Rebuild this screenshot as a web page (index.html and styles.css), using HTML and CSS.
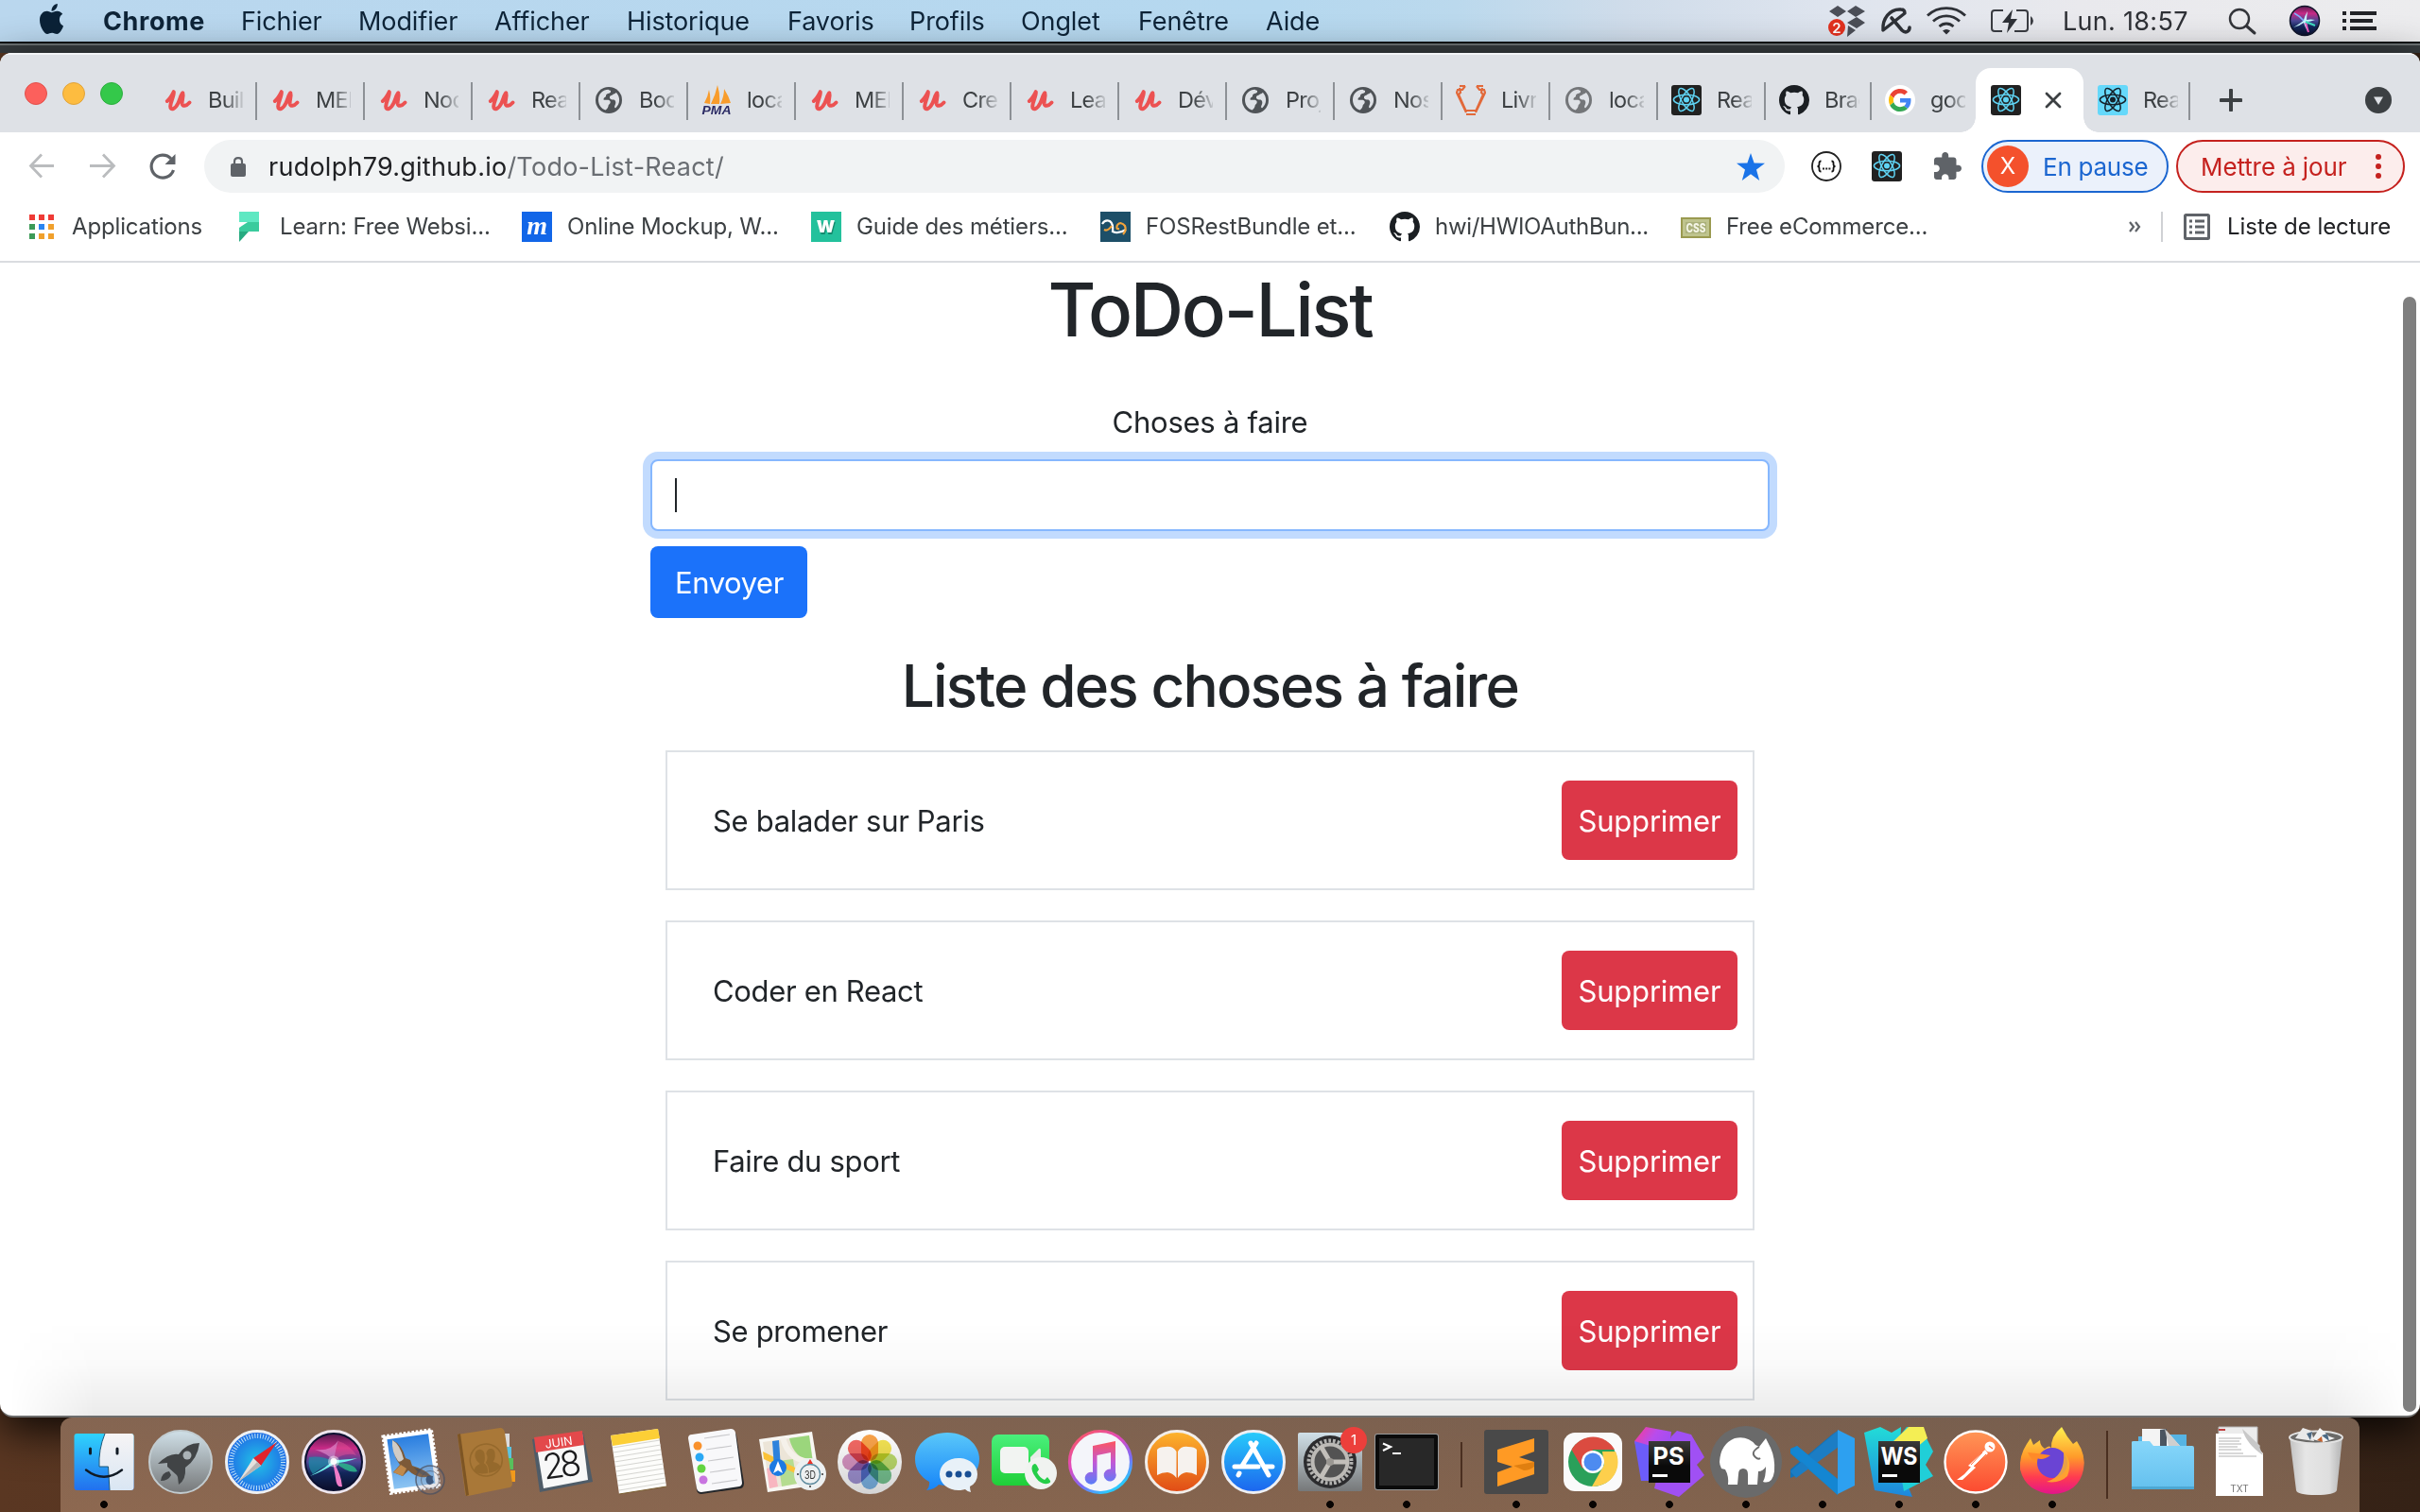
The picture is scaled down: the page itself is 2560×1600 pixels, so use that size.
FILE: index.html
```html
<!DOCTYPE html>
<html lang="fr">
<head>
<meta charset="utf-8">
<title>ToDo-List</title>
<link rel="stylesheet" href="styles.css">
</head>
<body>
<svg class="defs" width="0" height="0">
  <defs>
    <linearGradient id="gFinder" x2="0" y2="1"><stop offset="0" stop-color="#2fd3fd"/><stop offset="1" stop-color="#2270ee"/></linearGradient>
    <linearGradient id="gPale" x2="0" y2="1"><stop offset="0" stop-color="#f6f4f5"/><stop offset="1" stop-color="#d9e6f3"/></linearGradient>
    <linearGradient id="gSteel" x2="0" y2="1"><stop offset="0" stop-color="#d0e0e8"/><stop offset="1" stop-color="#767879"/></linearGradient>
    <radialGradient id="gSafari"><stop offset="0" stop-color="#22c4e6"/><stop offset="1" stop-color="#1f6be6"/></radialGradient>
    <linearGradient id="gSiri" x2="0" y2="1"><stop offset="0" stop-color="#5a1c50"/><stop offset=".25" stop-color="#c82a86"/><stop offset=".5" stop-color="#4b4896"/><stop offset=".7" stop-color="#12265a"/><stop offset="1" stop-color="#0b0f2c"/></linearGradient>
    <linearGradient id="gSky" x2="0" y2="1"><stop offset="0" stop-color="#2a7ee0"/><stop offset="1" stop-color="#8cc4f2"/></linearGradient>
    <linearGradient id="gMsg" x2="0" y2="1"><stop offset="0" stop-color="#5ac8fa"/><stop offset="1" stop-color="#1684f8"/></linearGradient>
    <linearGradient id="gGreen" x2="0" y2="1"><stop offset="0" stop-color="#4af07c"/><stop offset="1" stop-color="#1fcf38"/></linearGradient>
    <linearGradient id="gRing" x2=".6" y2="1"><stop offset="0" stop-color="#ff5a50"/><stop offset=".45" stop-color="#e04ac0"/><stop offset=".75" stop-color="#7a6cf8"/><stop offset="1" stop-color="#2ac8ff"/></linearGradient>
    <linearGradient id="gNote" x2="0" y2="1"><stop offset="0" stop-color="#fc5560"/><stop offset=".5" stop-color="#c058d8"/><stop offset="1" stop-color="#5a7cf8"/></linearGradient>
    <linearGradient id="gBooks" x2="0" y2="1"><stop offset="0" stop-color="#fdb52c"/><stop offset="1" stop-color="#e04a16"/></linearGradient>
    <linearGradient id="gStore" x2="0" y2="1"><stop offset="0" stop-color="#27cdfb"/><stop offset="1" stop-color="#1c64ee"/></linearGradient>
    <linearGradient id="gPS" x2="1" y2="1"><stop offset="0" stop-color="#fb3a90"/><stop offset=".35" stop-color="#b84cec"/><stop offset="1" stop-color="#8050fa"/></linearGradient>
    <linearGradient id="gInk" x2="0" y2="1"><stop offset="0" stop-color="#3a3a3a"/><stop offset=".6" stop-color="#0a0a0a"/></linearGradient>
    <linearGradient id="gWS" x2="0" y2="1"><stop offset="0" stop-color="#22dcd8"/><stop offset="1" stop-color="#1e86dc"/></linearGradient>
    <linearGradient id="gPost" x2="0" y2="1"><stop offset="0" stop-color="#ff9656"/><stop offset="1" stop-color="#fc4a30"/></linearGradient>
    <linearGradient id="gFox" x2="0" y2="1"><stop offset="0" stop-color="#fff14f"/><stop offset=".45" stop-color="#ff9a2a"/><stop offset=".75" stop-color="#ff3b50"/><stop offset="1" stop-color="#e3148c"/></linearGradient>
    <linearGradient id="gFolder" x2="0" y2="1"><stop offset="0" stop-color="#86d6fa"/><stop offset="1" stop-color="#64c0ee"/></linearGradient>
    <linearGradient id="gTrash" x2="1" y2="0"><stop offset="0" stop-color="#c2c2c2"/><stop offset=".3" stop-color="#e6e6e6"/><stop offset=".75" stop-color="#dedede"/><stop offset="1" stop-color="#b2b2b2"/></linearGradient>
    <linearGradient id="gWhite" x2="0" y2="1"><stop offset="0" stop-color="#fff"/><stop offset="1" stop-color="#d4d4d4"/></linearGradient>
  </defs>
  <symbol id="atom" viewBox="0 0 32 32"><circle cx="16" cy="15.5" r="3"  fill="currentColor"/><g fill="none" stroke="currentColor" stroke-width="1.5"><ellipse cx="16" cy="15.5" rx="13.6" ry="5.2"/><ellipse cx="16" cy="15.5" rx="13.6" ry="5.2" transform="rotate(60 16 15.5)"/><ellipse cx="16" cy="15.5" rx="13.6" ry="5.2" transform="rotate(120 16 15.5)"/></g></symbol>
  <symbol id="udemy" viewBox="0 0 32 32"><path d="M4.800 17C8 14.500 10 11 11.800 7.200C12.200 12 8.200 18 8.200 22.500C8.200 27.500 13.500 25.500 16.500 19C18.500 14.500 19.500 10 21.300 8.300C22.500 12 20.300 15.500 20.600 19.500C21 23 25 22.500 28.500 18.500" fill="none" stroke="#ec5252" stroke-width="4" stroke-linejoin="round" stroke-linecap="round"/></symbol>
  <symbol id="globe" viewBox="0 0 32 32"><circle cx="16" cy="16" r="14" fill="currentColor"/><path d="M5 15.500C5 9 10 4.800 15.500 4.800C17 6 18.500 5.500 18 7.500C17 9.500 13.500 8.500 13 11C13.500 13 10.500 12.500 10.500 15.500C12.500 16.500 16 14.500 17.500 17C18.500 20 15.500 20 15.500 22.500C15 25 13 26 12.500 26.500C8 25 5 21 5 15.500Z" fill="#dee1e6"/><path d="M21 9.500C23 9.500 23.500 7.500 24 8C28.500 13 28 20 23.500 24C22.500 25 21.500 23.500 22.500 21.500C23.500 19.500 24 17 21.500 15.500C19 15.500 16.500 15 17 12.500C17.500 10.500 19.500 11.500 21 9.500Z" fill="#dee1e6"/></symbol>
  <symbol id="github" viewBox="0 0 16 16"><path fill="currentColor" d="M8 0C3.58 0 0 3.58 0 8c0 3.540 2.290 6.530 5.470 7.590.4.070.55-.17.55-.38 0-.19-.01-.82-.01-1.490-2.010.37-2.530-.49-2.690-.94-.09-.23-.48-.94-.82-1.130-.28-.15-.68-.52-.01-.53.63-.01 1.080.58 1.230.82.72 1.210 1.870.87 2.330.66.07-.52.28-.87.51-1.070-1.780-.2-3.640-.89-3.640-3.950 0-.87.31-1.590.82-2.150-.08-.2-.36-1.020.08-2.120 0 0 .67-.21 2.200.82.64-.18 1.320-.27 2-.27s1.360.09 2 .27c1.530-1.040 2.200-.82 2.200-.82.44 1.100.16 1.920.08 2.120.51.56.82 1.270.82 2.150 0 3.070-1.870 3.750-3.650 3.950.29.25.54.73.54 1.480 0 1.070-.01 1.930-.01 2.200 0 .21.15.46.55.38A8.010 8.010 0 0 0 16 8c0-4.420-3.580-8-8-8z"/></symbol>
</svg>

<header class="menubar">
  <svg class="apple" viewBox="4 32 376 448" preserveAspectRatio="none"><path fill="currentColor" d="M318.7 268.700c-.2-36.700 16.400-64.400 50-84.800-18.800-26.900-47.200-41.700-84.700-44.600-35.500-2.800-74.300 20.700-88.500 20.700-15 0-49.400-19.700-76.400-19.700C63.300 141.200 4 184.800 4 273.500q0 39.300 14.400 81.200c12.800 36.700 59 126.700 107.200 125.200 25.200-.6 43-17.900 75.800-17.900 31.800 0 48.300 17.900 76.400 17.900 48.600-.7 90.400-82.500 102.600-119.300-65.200-30.700-61.700-90-61.700-91.900zm-56.600-164.200c27.300-32.400 24.800-61.900 24-72.500-24.100 1.400-52 16.400-67.900 34.900-17.500 19.800-27.800 44.300-25.600 71.900 26.100 2 49.900-11.400 69.500-34.300z"/></svg>
  <nav class="menus">
    <span class="app-name">Chrome</span><span>Fichier</span><span>Modifier</span><span>Afficher</span><span>Historique</span><span>Favoris</span><span>Profils</span><span>Onglet</span><span>Fenêtre</span><span>Aide</span>
  </nav>
  <svg class="status" viewBox="1920 0 260 44">
    <g fill="#4b4e57"><path d="M1935 12l9-6 9 6-9 6zM1954 12l9-6 10 6-10 6zM1954 24l10-6 9 6-9 6zM1955 27l8 5-9 7z"/></g>
    <circle cx="1943" cy="29" r="9" fill="#e2311f"/><text x="1943" y="34.500" class="status-count">2</text>
    <g fill="none" stroke="#2e3137" stroke-linecap="round"><path d="M1992 32C1991 20 1999 9 2011 10C2014 10 2015 12 2015 14Z" stroke-width="3.400" stroke-linejoin="round"/><path d="M2001 19L2012 32C2016 36 2020 33 2020 29" stroke-width="3.600"/></g>
    <g fill="none" stroke="#2e3137" stroke-width="2.800"><path d="M2039 16.500C2050 6 2068 6 2079 16.500"/><path d="M2045 22.500C2053 15 2065 15 2073 22.500"/><path d="M2051.500 28C2056 24 2062 24 2066.500 28"/></g><path d="M2055 32.500Q2059 29.500 2063 32.500L2059 36.500Z" fill="#2e3137"/>
    <g fill="none" stroke="#3a3c42" stroke-width="2"><path d="M2119 11H2110Q2107 11 2107 14V30Q2107 33 2110 33H2118M2133 11H2142Q2145 11 2145 14V30Q2145 33 2142 33H2131"/></g><path d="M2148 17Q2151 19 2151 22T2148 27Z" fill="#3a3c42"/><path d="M2129 10L2118 24H2125L2123 35L2134 20H2127Z" fill="#2e3137"/>
  </svg>
  <span class="clock">Lun. 18:57</span>
  <svg class="tray" viewBox="2350 0 170 44">
    <g fill="none" stroke="#33353a" stroke-linecap="round"><circle cx="2369" cy="20" r="10" stroke-width="2.400"/><path d="M2377 28L2385 35" stroke-width="3"/></g>
    <circle cx="2438" cy="22" r="15.500" fill="url(#gSiri)" stroke="#10152a" stroke-width="1.500"/><path d="M2426 29Q2435 24 2437 21Q2438 17 2441 12Q2440 18 2440 21Q2444 20 2449 21Q2444 23 2440 23Q2441 27 2441 33Q2438 28 2437 24Q2432 28 2426 29Z" fill="#c8f8ff"/><path d="M2427 14Q2433 17 2437 22" stroke="#7fb4ff" stroke-width="1.500" fill="none"/><path d="M2439 24L2442 34" stroke="#f05ac0" stroke-width="2"/><path d="M2439 23L2449 27" stroke="#3edcc0" stroke-width="2"/>
    <g fill="#222327"><path d="M2478 12h4v4h-4zM2478 20h4v4h-4zM2478 28h4v4h-4zM2486 12h28v4h-28zM2486 20h24v4h-24zM2486 28h28v4h-28z"/></g>
  </svg>
</header>

<div class="desktop">
<div class="window">
  <div class="tabstrip">
    <div class="lights"><i class="red"></i><i class="amber"></i><i class="green"></i></div>
    <div class="tab"><svg><use href="#udemy"/></svg><b>Buil</b></div>
    <div class="tab"><svg><use href="#udemy"/></svg><b>MER</b></div>
    <div class="tab"><svg><use href="#udemy"/></svg><b>Nod</b></div>
    <div class="tab"><svg><use href="#udemy"/></svg><b>Rea</b></div>
    <div class="tab"><svg class="globe"><use href="#globe"/></svg><b>Boo</b></div>
    <div class="tab"><svg viewBox="0 0 32 32"><path d="M3 19Q7 12 8 5Q10 12 9 20ZM10 20Q15 10 17 0Q20 10 19 20ZM20 20Q24 12 24 4Q29 12 31 19Z" fill="#f89c2c"/><text x="16" y="30.500" class="pma" textLength="31" lengthAdjust="spacingAndGlyphs">PMA</text></svg><b>loca</b></div>
    <div class="tab"><svg><use href="#udemy"/></svg><b>MER</b></div>
    <div class="tab"><svg><use href="#udemy"/></svg><b>Crea</b></div>
    <div class="tab"><svg><use href="#udemy"/></svg><b>Lear</b></div>
    <div class="tab"><svg><use href="#udemy"/></svg><b>Dév</b></div>
    <div class="tab"><svg class="globe"><use href="#globe"/></svg><b>Proj</b></div>
    <div class="tab"><svg class="globe"><use href="#globe"/></svg><b>Nos</b></div>
    <div class="tab"><svg viewBox="0 0 32 32"><path d="M4 1L10 1M22 1H29M10 1L7 5H2L1 8L11 29M22 1L25 5H30L31 8L21 29M4 3L5 8L3 10L11 28M28 3L27 8L29 10L21 28M11 27H21M11 31H21" fill="none" stroke="#e2693a" stroke-width="2.200"/></svg><b>Livr</b></div>
    <div class="tab"><svg class="globe pale"><use href="#globe"/></svg><b>loca</b></div>
    <div class="tab"><svg class="react"><use href="#atom"/></svg><b>Rea</b></div>
    <div class="tab narrow"><svg class="octo"><use href="#github"/></svg><b>Brad</b></div>
    <div class="tab google last-sep"><svg viewBox="0 0 32 32"><circle cx="16" cy="16" r="16" fill="#fff"/><g transform="translate(4 4) scale(.5)"><path fill="#EA4335" d="M24 9.500c3.540 0 6.710 1.220 9.210 3.600l6.850-6.850C35.900 2.380 30.470 0 24 0 14.620 0 6.510 5.380 2.560 13.220l7.980 6.190C12.430 13.720 17.740 9.500 24 9.500z"/><path fill="#4285F4" d="M46.980 24.550c0-1.570-.15-3.090-.38-4.550H24v9.020h12.940c-.58 2.960-2.260 5.480-4.780 7.180l7.730 6c4.510-4.180 7.090-10.360 7.090-17.650z"/><path fill="#FBBC05" d="M10.530 28.590c-.48-1.450-.76-2.990-.76-4.590s.27-3.140.76-4.590l-7.980-6.190C.92 16.460 0 20.120 0 24c0 3.880.92 7.540 2.560 10.780l7.970-6.190z"/><path fill="#34A853" d="M24 48c6.480 0 11.930-2.130 15.890-5.810l-7.730-6c-2.150 1.450-4.920 2.300-8.160 2.300-6.260 0-11.570-4.220-13.470-9.910l-7.980 6.190C6.510 42.620 14.620 48 24 48z"/></g></svg><b>goo</b></div>
    <div class="tab active"><svg class="react"><use href="#atom"/></svg><svg class="close" viewBox="0 0 18 18"><path d="M2 2L16 16M16 2L2 16" stroke="#3c4043" stroke-width="2.800" stroke-linecap="round"/></svg></div>
    <div class="tab narrow"><svg class="react sky"><use href="#atom"/></svg><b>Rea</b></div>
    <svg class="plus" viewBox="0 0 24 24"><path d="M12 1.500V22.500M1.500 12H22.500" stroke="#3c4043" stroke-width="4" stroke-linecap="round"/></svg>
    <svg class="chevron" viewBox="0 0 28 28"><circle cx="14" cy="14" r="14" fill="#3c4043"/><path d="M9 10.500H19L14 19Z" fill="#dee1e6"/></svg>
  </div>

  <div class="toolbar">
    <svg class="nav" viewBox="0 0 170 40">
      <g fill="none" stroke="#babcbe" stroke-width="2.800"><path d="M27 19.500H3M14 7.500L2.500 19.500L14 31.500M65 19.500H90M79 7.500L90.500 19.500L79 31.500"/></g>
      <path d="M151 12A12 12 0 1 0 153.500 24" fill="none" stroke="#5f6368" stroke-width="3.200"/><path d="M155.500 7V18H144.500Z" fill="#5f6368"/>
    </svg>
    <div class="omnibox">
      <svg class="lock" viewBox="0 0 16 21"><rect y="7" width="16" height="14" rx="2" fill="#5f6368"/><path d="M4 8V5Q4 1.200 8 1.200T12 5V8" fill="none" stroke="#5f6368" stroke-width="2.200"/></svg>
      <span class="url">rudolph79.github.io<em>/Todo-List-React/</em></span>
      <svg class="star" viewBox="0 0 30 29"><path d="M15 0L18.600 10.400L30 10.800L21 17.600L24.200 29L15 22.300L5.800 29L9 17.600L0 10.800L11.400 10.400Z" fill="#1a73e8"/></svg>
    </div>
    <svg class="json" viewBox="0 0 32 32"><circle cx="16" cy="16" r="15" fill="#fff" stroke="#222" stroke-width="1.800"/><path d="M10.500 10.500Q8.300 10.500 8.500 13Q8.700 16 6.500 16Q8.700 16 8.500 19Q8.300 21.500 10.500 21.500M21.500 10.500Q23.700 10.500 23.500 13Q23.300 16 25.500 16Q23.300 16 23.500 19Q23.700 21.500 21.500 21.500" fill="none" stroke="#111" stroke-width="1.800"/><path d="M12 17.500h2v2h-2zM15.200 17.500h2v2h-2zM18.400 17.500h2v2h-2z" fill="#222"/></svg>
    <svg class="react ext"><use href="#atom"/></svg>
    <svg class="puzzle" viewBox="2 1 21 21"><path fill="#5f6368" d="M20.500 11H19V7c0-1.100-.9-2-2-2h-4V3.500C13 2.120 11.880 1 10.500 1S8 2.120 8 3.500V5H4c-1.100 0-1.990.9-1.990 2v3.800H3.500c1.490 0 2.700 1.210 2.700 2.700s-1.210 2.700-2.700 2.700H2V20c0 1.100.9 2 2 2h3.800v-1.500c0-1.490 1.210-2.700 2.700-2.700 1.490 0 2.700 1.210 2.700 2.700V22H17c1.100 0 2-.9 2-2v-4h1.500c1.380 0 2.500-1.120 2.500-2.500S21.880 11 20.500 11z"/></svg>
    <div class="pill profile"><span class="avatar">X</span><span class="pill-text">En pause</span></div>
    <div class="pill update"><span class="pill-text">Mettre à jour</span><span class="dots"><i></i><i></i><i></i></span></div>
  </div>

  <div class="bookmarks">
    <div class="bm b1"><svg viewBox="0 0 32 32"><g><path fill="#ef3b36" d="M3 3h6v6H3zM13 3h6v6h-6zM23 3h6v6h-6z"/><path fill="#3c9a57" d="M3 13h6v6H3zM3 23h6v6H3z"/><path fill="#2a85f0" d="M13 13h6v6h-6z"/><path fill="#f0a02c" d="M23 13h6v6h-6zM23 23h6v6h-6zM13 23h6v6h-6z"/></g></svg><span>Applications</span></div>
    <div class="bm b2"><svg viewBox="0 0 32 32"><path d="M5 0H26V11H5Z" fill="#5fe8c2"/><path d="M26 11V21H5V17L14 11Z" fill="#3acb9d"/><path d="M5 21H15L5 32Z" fill="#26aa80"/></svg><span>Learn: Free Websi...</span></div>
    <div class="bm b3"><svg viewBox="0 0 32 32"><rect width="32" height="32" fill="#1266e8"/><text x="16" y="24" class="bm-m">m</text></svg><span>Online Mockup, W...</span></div>
    <div class="bm b4"><svg viewBox="0 0 32 32"><rect width="32" height="32" fill="#23c19c"/><text x="16.500" y="23.500" class="bm-w shade">W</text><text x="15.500" y="22" class="bm-w">W</text></svg><span>Guide des métiers...</span></div>
    <div class="bm b5"><svg viewBox="0 0 32 32"><rect width="32" height="32" fill="#1d4f68"/><path d="M2 13Q5 8 10 10Q14 13 13 21Q19 24 27 19" fill="none" stroke="#fff" stroke-width="2.200"/><path d="M4 19Q8 21 12 15M18 14Q22 10 26 15Q28 20 24 24M18 14Q16 19 20 18" fill="none" stroke="#f2a33a" stroke-width="2.200"/></svg><span>FOSRestBundle et...</span></div>
    <div class="bm b6"><svg class="octo"><use href="#github"/></svg><span>hwi/HWIOAuthBun...</span></div>
    <div class="bm b7"><svg viewBox="0 0 32 32"><rect x="1" y="7" width="30" height="20" fill="#bfc48e" stroke="#9a9a50" stroke-width="2"/><rect x="5" y="11" width="22" height="12" fill="#aab07a"/><text x="16" y="22" class="bm-css" textLength="21" lengthAdjust="spacingAndGlyphs">CSS</text></svg><span>Free eCommerce...</span></div>
    <svg class="more" viewBox="0 0 14 12"><path d="M2 1L6 6L2 11M8 1L12 6L8 11" fill="none" stroke="#5f6368" stroke-width="2.200"/></svg>
    <div class="bm reading"><svg viewBox="0 0 32 32"><rect x="3.500" y="3.500" width="25" height="25" rx="1" fill="none" stroke="#5f6368" stroke-width="3"/><path d="M8 8.500h3v3H8zM8 14.500h3v3H8zM8 20.500h3v3H8zM14 8.500h10v3H14zM14 14.500h10v3H14zM14 20.500h10v3H14z" fill="#5f6368"/></svg><span>Liste de lecture</span></div>
  </div>

  <main class="page">
    <h1>ToDo-List</h1>
    <form class="todo-form">
      <label>Choses à faire</label>
      <div class="field"><i class="caret"></i></div>
      <span class="btn primary">Envoyer</span>
    </form>
    <h2>Liste des choses à faire</h2>
    <ul class="todos">
      <li><span>Se balader sur Paris</span><span class="btn danger">Supprimer</span></li>
      <li><span>Coder en React</span><span class="btn danger">Supprimer</span></li>
      <li><span>Faire du sport</span><span class="btn danger">Supprimer</span></li>
      <li><span>Se promener</span><span class="btn danger">Supprimer</span></li>
    </ul>
    <div class="dock-shade"></div>
    <div class="scroll-thumb"></div>
  </main>
</div>

<footer class="dock">
  <svg class="app on" viewBox="0 0 80 100"><rect x="8.500" y="17" width="63" height="60" rx="3" fill="url(#gFinder)"/><path d="M41 17H68.500Q71.500 17 71.500 20V74Q71.500 77 68.500 77H46Q45 62 44.500 52H35Q34 34 41 17Z" fill="url(#gPale)"/><path d="M41 17Q34 34 35 52H44.500Q45 62 46 77" fill="none" stroke="#1d5878" stroke-width="1"/><path d="M25.500 33V38M54 33V38" stroke="#111a24" stroke-width="3" stroke-linecap="round"/><path d="M21 55.500Q40 70 59 55.500" fill="none" stroke="#111a24" stroke-width="2.400" stroke-linecap="round"/></svg>
  <svg class="app" viewBox="0 0 80 100"><circle cx="40" cy="47" r="33" fill="url(#gSteel)" stroke="#c2ccd0" stroke-width="2"/><path d="M60 27Q46 27 38 39Q28 37 16 49L26 48L26 52L36 61L37 63L38 71Q46 66 45 53Q58 44 60 27Z" fill="#414446"/><circle cx="47" cy="40" r="4.500" fill="#aab2b6"/><path d="M28 57Q20 58 19 67Q27 67 30 61Z" fill="#414446"/></svg>
  <svg class="app" viewBox="0 0 80 100"><circle cx="40" cy="47" r="32.500" fill="url(#gSafari)" stroke="#eef0f2" stroke-width="3"/><circle cx="40" cy="47" r="27.500" fill="none" stroke="#bfe2f8" stroke-width="5" stroke-dasharray="1 1.880"/><path d="M61 26L44 51L36 43Z" fill="#e0242c"/><path d="M20 68L36 43L44 51Z" fill="#e6e2de"/><path d="M20 68L40 47L44 51Z" fill="#b8b4b4"/></svg>
  <svg class="app" viewBox="0 0 80 100"><circle cx="40" cy="47" r="32.500" fill="#0b1030" stroke="#eee6ee" stroke-width="3"/><circle cx="40" cy="47" r="29" fill="url(#gSiri)"/><path d="M14 42Q28 40 40 47Q28 52 18 60Q12 52 14 42Z" fill="#1c8fa8" opacity=".7"/><path d="M15 62Q34 52 39 45Q50 45 65 43Q52 48 42 48Q29 57 15 62Z" fill="#6ff4ee"/><path d="M39 46Q48 60 49 73Q43 75 42 64Z" fill="#f07cc8"/><path d="M40 46Q43 30 45 24Q38 36 20 34Q34 38 40 46Z" fill="#e8a0dc" opacity=".55"/><path d="M42 48Q56 60 65 57Q62 48 42 48Z" fill="#2bb68c" opacity=".85"/><path d="M39 46Q52 36 64 40Q56 28 45 25Z" fill="#f05a9c" opacity=".4"/><circle cx="40" cy="46.500" r="6" fill="#fff" opacity=".45"/><circle cx="40" cy="46.500" r="3.500" fill="#fff" opacity=".9"/></svg>
  <svg class="app stamp" viewBox="0 0 80 100"><g transform="rotate(-8 43 47)"><rect x="17" y="16" width="52" height="61" fill="#fff"/><rect x="17" y="16" width="52" height="61" fill="none" stroke="#fff" stroke-width="3" stroke-dasharray="2.600 1.800"/><rect x="21" y="20" width="44" height="53" fill="url(#gSky)"/></g><path d="M23 24Q33 28 37 43L42 45L44 51Q58 55 64 62Q50 66 40 56L34 62L24 58L31 50Q24 42 23 24Z" fill="#7d5a38"/><path d="M23 24Q31 28 35 44Q31 48 29 46Q22 36 23 24Z" fill="#d0ccc6"/><path d="M46 53Q58 56 63 62Q52 62 46 53Z" fill="#55504c"/><path d="M24 58L32 50L38 54L34 62Z" fill="#c08a4c"/><circle cx="63" cy="66" r="15" fill="#8c8a98" opacity=".22"/><circle cx="63" cy="66" r="15" fill="none" stroke="#4b5060" stroke-width="1.600" opacity=".75"/><circle cx="63" cy="66" r="9.500" fill="none" stroke="#4b5060" stroke-width="1" opacity=".6"/><path d="M60 62Q63 61 66 62Q65 66 67 68Q64 73 60 70Q57 65 60 62Z" fill="#2d4468" opacity=".8"/></svg>
  <svg class="app" viewBox="0 0 80 100"><path d="M56 17H64V72H56Z" fill="#dcdcdc"/><path d="M61 31H66V43H61Z" fill="#5cc4e0"/><path d="M62 43H68V55H62Z" fill="#58c05c"/><path d="M63 56H70V68H64Z" fill="#f29a1c"/><path d="M9 18L54 11Q58 11 59 16L67 70Q67 73 64 74L20 83Q17 83 17 80Z" fill="#a97838"/><path d="M9 18L12 17L21 82L18 83Z" fill="#7d5524"/><g transform="rotate(-8 39 43)"><circle cx="39" cy="45" r="17" fill="none" stroke="#95692c" stroke-width="1.500"/><path d="M25 55Q25 50 32 48Q27 43 28 38Q29 33 34 33Q39 34 38 41Q38 45 36 48Q40 50 39 59Q30 60 25 55ZM40 59Q41 51 38 48Q42 44 40 38Q42 33 46 34Q50 35 49 41Q49 45 46 48Q52 50 53 54Q49 59 40 59Z" fill="#95692c"/></g></svg>
  <svg class="app" viewBox="0 0 80 100"><path d="M7 23L61 16L71 68L15 79Z" fill="#4f5c68"/><path d="M11 25L60 17L66 66L19 75Z" fill="#f8f8f8"/><path d="M9 21L60 14L62 29L11 37Z" fill="#e3494b"/><g transform="rotate(-8 38 47)"><text x="38" y="30.500" class="cal-month">JUIN</text><text x="38" y="63" class="cal-day" textLength="41">28</text></g></svg>
  <svg class="app" viewBox="0 0 80 100"><path d="M9 19L59 12L68 73L18 81Z" fill="#fdfdfb"/><path d="M9 19L59 12L61 22L11 30Z" fill="#fccf36"/><path d="M11 32L61 24M12 37L62 29M13 42L62 34M13 47L63 39M14 52L64 44M15 57L65 49M15 62L65 54M16 67L66 59M17 72L67 64M18 77L67 69" stroke="#d6d6d2" stroke-width="1.200"/><path d="M18 81L68 73" stroke="#7a5e30" stroke-width="1"/></svg>
  <svg class="app" viewBox="0 0 80 100"><path d="M14 20L55 14Q60 14 61 19L69 69Q69 74 66 75L24 81Q20 81 19 77Z" fill="#23262a"/><path d="M14 18L55 12Q59 12 60 16L67 69Q67 72 64 73L24 79Q20 79 19 75L10 22Q10 18 14 18Z" fill="#f8f8fa"/><circle cx="20" cy="30" r="4.500" fill="#f9912c"/><circle cx="22" cy="42" r="4.500" fill="#2aa8f4"/><circle cx="24" cy="54" r="4.500" fill="#62d440"/><circle cx="26" cy="66" r="4.500" fill="#c874e0"/><path d="M27 22L54 18M29 34L56 30M31 46L58 42M33 58L60 54M35 70L62 66" stroke="#c9c9cc" stroke-width="1.200"/></svg>
  <svg class="app" viewBox="0 0 80 100"><path d="M4 23L60 15L69 71L13 79Z" fill="#f8f7f3"/><path d="M8 26L57 19L64 67L15 75Z" fill="#ece5d8"/><path d="M36 22L57 19L61 48Q40 42 36 22Z" fill="#9bd67c"/><path d="M24 46L40 44L44 70L28 73Z" fill="#b5dc90"/><path d="M8 36L60 62V67L9 44Z" fill="#fbc238"/><path d="M12 54L20 52L24 73L15 75Z" fill="#f8b6c0"/><path d="M29 21Q35 47 62 47" fill="none" stroke="#f5f1ea" stroke-width="6"/><path d="M18 25L25 24L27 54H20Z" fill="#2d82dc"/><circle cx="24" cy="53" r="9" fill="#1b7ae2"/><path d="M24 46L29 59L24 56L19 59Z" fill="#fff"/><circle cx="58" cy="60" r="17" fill="#edf0f1"/><circle cx="58" cy="60" r="10.500" fill="none" stroke="#5d8a9e" stroke-width="1.300"/><path d="M55 49L58 44L61 49Z" fill="#ea3228"/><path d="M44 60H46M70 60H72M58 72V74" stroke="#333" stroke-width="1.500"/><text x="58" y="65" class="map3d" textLength="12" lengthAdjust="spacingAndGlyphs">3D</text></svg>
  <svg class="app" viewBox="0 0 80 100"><circle cx="40" cy="47" r="34" fill="url(#gWhite)"/><g class="petals"><rect x="31" y="18" width="18" height="28" rx="9" fill="#f8942c"/><rect x="31" y="18" width="18" height="28" rx="9" fill="#f2df36" transform="rotate(45 40 47)"/><rect x="31" y="18" width="18" height="28" rx="9" fill="#b2d654" transform="rotate(90 40 47)"/><rect x="31" y="18" width="18" height="28" rx="9" fill="#62bb80" transform="rotate(135 40 47)"/><rect x="31" y="18" width="18" height="28" rx="9" fill="#66a8e2" transform="rotate(180 40 47)"/><rect x="31" y="18" width="18" height="28" rx="9" fill="#8f80cc" transform="rotate(225 40 47)"/><rect x="31" y="18" width="18" height="28" rx="9" fill="#d182b8" transform="rotate(270 40 47)"/><rect x="31" y="18" width="18" height="28" rx="9" fill="#f2504a" transform="rotate(315 40 47)"/></g></svg>
  <svg class="app" viewBox="0 0 80 100"><path d="M40 16C21 16 6 28 6 44C6 55 12 63 21 68Q22 73 18 77Q27 76 31 71Q35 72 40 72C59 72 74 60 74 44S59 16 40 16Z" fill="url(#gMsg)"/><path d="M52 43C41 43 32 50 32 60S41 77 52 77Q56 77 59 76Q62 79 65 79Q64 76 64 73Q72 69 72 60C72 50 63 43 52 43Z" fill="#e8f1f8"/><g fill="#194f94"><circle cx="42" cy="60" r="3.500"/><circle cx="52" cy="60" r="3.500"/><circle cx="62" cy="60" r="3.500"/></g></svg>
  <svg class="app" viewBox="0 0 80 100"><rect x="6" y="18" width="61" height="54" rx="7" fill="url(#gGreen)"/><rect x="15" y="31" width="30" height="28" rx="5" fill="#f2f4f2"/><path d="M47 42L56 33Q58 32 58 35V55Q58 58 56 57L47 50Z" fill="#e8ece8"/><circle cx="58" cy="59" r="17" fill="#f0f3f0"/><path d="M49 51Q52 47 54 51L56 55L54 58Q57 64 62 66L65 63L68 67Q69 69 65 70Q58 71 53 64Q47 56 49 51Z" fill="#25ce48"/></svg>
  <svg class="app" viewBox="0 0 80 100"><circle cx="40" cy="47" r="32.500" fill="#f4f5fa" stroke="url(#gRing)" stroke-width="3.200"/><path d="M32 30L56 25V58A6.500 6.500 0 1 1 51 54.500V37L36.500 40V63A6.500 6.500 0 1 1 32 58Z" fill="url(#gNote)"/></svg>
  <svg class="app" viewBox="0 0 80 100"><circle cx="40" cy="47" r="32.500" fill="url(#gBooks)" stroke="#f2eeea" stroke-width="3"/><path d="M39.500 36Q36 30 28 31Q21 31 19 34V61Q24 58 30 58Q36 59 39.500 64ZM41 36Q44 30 52 31Q59 31 61 34V61Q56 58 50 58Q44 59 41 64Z" fill="#f6f2ee"/></svg>
  <svg class="app" viewBox="0 0 80 100"><circle cx="40" cy="47" r="32.500" fill="url(#gStore)" stroke="#eef0f4" stroke-width="3"/><g stroke="#fff" stroke-width="5" stroke-linecap="round"><path d="M43 27L28 51M37 27L56 61M20 52H45M52 52H60M24 61L25 59"/></g></svg>
  <svg class="app on" viewBox="0 0 80 100"><rect x="6" y="16" width="68" height="62" rx="2" fill="url(#gSteel)"/><circle cx="40" cy="47" r="28" fill="#2c2c2e"/><circle cx="40" cy="47" r="22.500" fill="none" stroke="#b2b2b0" stroke-width="4" stroke-dasharray="2.800 1.910"/><circle cx="40" cy="47" r="18.500" fill="#535353" stroke="#bcbab6" stroke-width="4"/><path d="M40 47L60 47M40 47L30 30M40 47L30 64" stroke="#c2bfba" stroke-width="5"/><circle cx="40" cy="47" r="4" fill="#9a9792"/><circle cx="65" cy="24" r="14" fill="#ec3f3b"/><text x="65" y="29" class="badge">1</text></svg>
  <svg class="app on" viewBox="0 0 80 100"><rect x="6" y="17" width="68" height="60" rx="3" fill="#97999a"/><rect x="7" y="18" width="66" height="58" rx="2" fill="#0b0b0b"/><rect x="11" y="22" width="58" height="50" fill="#282828"/><path d="M15 27.500L23 31L15 35M25 38H34" fill="none" stroke="#fff" stroke-width="2.200"/></svg>
  <i class="rule r1"></i>
  <svg class="app on" viewBox="0 0 80 100"><rect x="6" y="13" width="68" height="68" rx="3" fill="#494949"/><path d="M20 34L59 22V36L43 42L59 47V60L20 73V58L36 52L20 47Z" fill="#ff9a24"/><path d="M37 51L59 47V52Q54 56 48 56Z" fill="#e07f10"/></svg>
  <svg class="app on" viewBox="0 0 80 100"><rect x="9" y="16" width="62" height="62" rx="12" fill="#fafafa"/><circle cx="40" cy="47" r="26" fill="#2aa05a"/><path d="M17.500 34A26 26 0 0 1 63 34H40L29 54Z" fill="#db4b40"/><path d="M63 34A26 26 0 0 1 39 73L52 50L50 36H64Z" fill="#fdcf4c"/><circle cx="40" cy="47" r="12" fill="#fff"/><circle cx="40" cy="47" r="9.500" fill="#4d8bf0"/></svg>
  <svg class="app on" viewBox="0 0 80 100"><path d="M3 25L15 10L42 15L40 35L10 67L10 50Z" fill="url(#gPS)"/><path d="M42 20L48 14L63 18L77 42L69 50L77 61L50 84L24 75L30 50Z" fill="#a050f4"/><path d="M3 25L10 67H20V30Z" fill="#6c5cfa"/><rect x="18" y="25" width="44" height="44" fill="url(#gInk)"/><text x="39" y="50" class="ide" textLength="33" lengthAdjust="spacingAndGlyphs">PS</text><rect x="22" y="60" width="16" height="3" fill="#fff"/></svg>
  <svg class="app on" viewBox="0 0 80 100"><circle cx="40" cy="47" r="38" fill="#6a6a6a"/><path d="M12 47Q13 28 28 22Q42 19 50 29L54 31L61 22L66 32Q71 43 70 57Q68 71 58 68Q61 63 61 52Q58 57 53 57L52 71H42V60Q42 54 37 54Q32 54 32 60L31 71H21Q22 62 18 55L14 54Q12 50 12 47Z" fill="#fff"/><path d="M54 31Q44 37 50 42Q53 45 55 43" fill="none" stroke="#6a6a6a" stroke-width="1.800"/></svg>
  <svg class="app on" viewBox="0 0 80 100"><path d="M56 14L13 61L6 64V55L50 18Z" fill="#1273b8"/><path d="M6 33L13 30L56 65V82L6 38Z" fill="#0f86d0"/><path d="M6 57L12 64L57 31V13Z" fill="#1c7dc4"/><path d="M6 36L13 30L56 66V82Z" fill="#1486d2"/><path d="M56 13L74 22V72L56 81Z" fill="#2da0f0"/></svg>
  <svg class="app on" viewBox="0 0 80 100"><path d="M3 16L20 10L32 16L42 10L40 50L54 84L14 77Z" fill="url(#gWS)"/><path d="M32 30L48 10L64 12L76 36L68 50L76 62L45 78L40 50Z" fill="#20cfd8"/><path d="M33 26L50 10H66L70 22L58 32Z" fill="#f4ee54"/><rect x="18" y="25" width="44" height="44" fill="url(#gInk)"/><text x="40" y="50" class="ide" textLength="39" lengthAdjust="spacingAndGlyphs">WS</text><rect x="22" y="60" width="16" height="3" fill="#fff"/></svg>
  <svg class="app on" viewBox="0 0 80 100"><circle cx="40" cy="47" r="32.500" fill="url(#gPost)" stroke="#fff" stroke-width="2.400"/><circle cx="55" cy="31" r="5.500" fill="#fff"/><path d="M50 34L32 51L36 53L53 38Z" fill="#fff"/><path d="M37 50L28 60L20 66L26 66L40 53Z" fill="#fff"/><path d="M47 37L35 50M51 39L38 52" stroke="#fc6c3c" stroke-width="1"/><path d="M54 30L58 33" stroke="#fc6c3c" stroke-width="1.500"/></svg>
  <svg class="app on" viewBox="0 0 80 100"><path d="M50 10Q55 20 62 28L66 25Q76 40 73 55Q68 80 40 81Q12 79 6 55Q5 40 13 28L17 22L20 29L27 24Q27 30 32 33Q38 28 39 33Q38 20 50 10Z" fill="url(#gFox)"/><circle cx="40" cy="48" r="16" fill="#6a44d4"/><path d="M24 43Q30 46 38 40Q26 38 14 37Q18 46 24 49Z" fill="#ff8a28"/><path d="M52 37Q62 46 56 62Q48 70 34 68Q54 62 52 37Z" fill="#ffb02c" opacity=".85"/></svg>
  <i class="rule r2"></i>
  <svg class="app" viewBox="0 0 80 100"><path d="M14 20H30L33 18H65V40H14Z" fill="#56b4e4"/><path d="M18 12H42L58 30V40H18Z" fill="#f4f4f4"/><path d="M37 13L44 12V36H37Z" fill="#4b5560"/><path d="M42 12L58 30H46Z" fill="#cfcfcf"/><path d="M7 26Q7 25 9 25H26L30 30H71Q73 30 73 32V73Q73 76 70 76H10Q7 76 7 73Z" fill="url(#gFolder)"/><path d="M7 73H73V76H7Z" fill="#4da8d4"/></svg>
  <svg class="app" viewBox="0 0 80 100"><path d="M18 10H59V40H18Z" fill="#ececec" stroke="#b8b8b8"/><path d="M15 17H45L65 38V83H15Z" fill="#fff"/><path d="M43 12Q47 28 65 40Q60 30 62 30Z" fill="#c8c8c8"/><path d="M18 12h7v2h-7z" fill="#c04040"/><path d="M18 22H42M18 25H40M18 28H42M18 31H38M18 34H42M18 38H44M18 41H58" stroke="#b2b2b2" stroke-width="1"/><text x="40" y="78.500" class="txt">TXT</text></svg>
  <svg class="app" viewBox="0 0 80 100"><path d="M12 20L68 20L62 77Q60 82 40 82T19 77Z" fill="url(#gTrash)"/><ellipse cx="40" cy="21" rx="28" ry="6.500" fill="#6b6a68" stroke="#e2e2e2" stroke-width="2"/><path d="M18 22L26 11L35 14L38 25Z" fill="#e9e9e9"/><path d="M36 23L44 11L54 20L60 22L48 26Z" fill="#f2f2f2"/><path d="M30 17L36 15L34 24ZM46 19L52 17L54 25Z" fill="#4d6a84"/><path d="M41 24L46 20L47 26Z" fill="#c4602c"/></svg>
</footer>
</div>
</body>
</html>
```
FILE: styles.css
```css
* { box-sizing: border-box; }
body { margin: 0; width: 2560px; height: 1600px; overflow: hidden; font-family: Inter, "Liberation Sans", sans-serif; color: #212529; }
.defs { position: absolute; }
svg { display: block; flex: none; }

/* macOS menu bar */
.menubar { display: flex; align-items: center; height: 44px; color: #0e2438; font-size: 27px; white-space: nowrap; background: linear-gradient(90deg, #bad7ee 0, #b5d8ef 1350px, #bbd9ed 1540px, #cfdcea 1720px, #dee4ee 1930px, #e9e9ed 2200px, #ececee 2560px); }
.apple { width: 25px; height: 32px; margin: -4px 42px 0 42px; color: #0b2237; }
.menus { display: grid; grid-template-columns: 146px 124px 144px 140px 170px 129px 118px 124px 135px 581px; letter-spacing: -.1px; }
.app-name { font-weight: 700; letter-spacing: .6px; }
.status { width: 260px; height: 44px; margin-right: 2px; }
.status-count { font-size: 15px; font-weight: 600; fill: #fff; text-anchor: middle; }
.clock { width: 168px; color: #2f3136; letter-spacing: .3px; }
.tray { width: 170px; height: 44px; }

/* desktop and window frame */
.desktop { position: relative; display: flex; flex-direction: column; height: 1556px; padding-top: 12px; background: linear-gradient(#0b1015 0 2px, #6e7475 2px 4px, #373c3f 4px 12px, transparent 12px), linear-gradient(90deg, #5a3722, #352216); }
.window { display: flex; flex-direction: column; height: 1444px; border-bottom: 2px solid #6d6d6d; border-radius: 12px 12px 14px 14px; overflow: hidden; background: #fff; box-shadow: 0 14px 46px rgba(0, 0, 0, .85); }

.tabstrip { display: flex; align-items: flex-start; height: 84px; padding-top: 16px; background: linear-gradient(#f2f4f6 0 2px, #dee1e6 2px); color: #3c4043; }
.lights { display: flex; gap: 16px; width: 157px; padding: 15px 0 0 26px; }
.lights i { width: 24px; height: 24px; border-radius: 50%; }
.red { background: #fc605c; border: 1px solid #e2504b; }
.amber { background: #fdbc40; border: 1px solid #e0a33a; }
.green { background: #34c84a; border: 1px solid #2cae3e; }
.tab { position: relative; display: flex; align-items: center; width: 114px; height: 68px; padding: 0 0 0 15px; }
.tab.narrow { width: 112px; }
.tab.google { width: 111px; }
.tab::after { content: ""; position: absolute; right: -1px; top: 15px; width: 2px; height: 40px; background: #8d9196; }
.tab.active::after, .tab.last-sep::after { display: none; }
.tab svg { width: 32px; height: 32px; }
.tab b { width: 37px; margin-left: 16px; overflow: hidden; font-size: 23.500px; line-height: 36px; font-weight: 400; letter-spacing: -.7px; white-space: nowrap; -webkit-mask-image: linear-gradient(90deg, #000 45%, rgba(0, 0, 0, .15)); mask-image: linear-gradient(90deg, #000 45%, rgba(0, 0, 0, .15)); }
.globe { color: #4f5357; }
.globe.pale { color: #747679; }
.octo { width: 32px; height: 32px; color: #1b1f23; }
.react { width: 32px; height: 32px; border-radius: 3px; background: #212121; color: #5fd3f3; }
.react.sky { background: #65d8fa; color: #15222b; }
.tab.active { width: 114px; padding-left: 16px; background: #fff; border-radius: 16px 16px 0 0; }
.tab.active::before { content: ""; position: absolute; left: -16px; right: -16px; bottom: 0; height: 16px; background: radial-gradient(circle at 0 0, transparent 15.5px, #fff 16px) left / 16px 16px no-repeat, radial-gradient(circle at 100% 0, transparent 15.5px, #fff 16px) right / 16px 16px no-repeat; }
.tab .close { width: 18px; height: 18px; margin-left: 25px; }
.plus { width: 24px; height: 24px; margin: 22px 0 0 32px; }
.chevron { width: 28px; height: 28px; margin: 20px 0 0 130px; }

.toolbar { display: flex; align-items: center; height: 72px; padding: 0 16px 0 30px; }
.nav { width: 170px; height: 40px; margin-right: 16px; }
.omnibox { display: flex; align-items: center; width: 1672px; height: 56px; padding: 0 21px 0 28px; border-radius: 28px; background: #f1f3f4; }
.lock { width: 16px; height: 21px; margin-right: 24px; }
.url { flex: 1; font-size: 27px; color: #202124; letter-spacing: .25px; }
.url em { font-style: normal; color: #6a6e73; }
.star { width: 30px; height: 29px; }
.json { width: 32px; height: 32px; margin-left: 28px; }
.ext { margin-left: 32px; }
.puzzle { width: 29px; height: 29px; margin: -1px 21px 0 34px; }
.pill { display: flex; align-items: center; height: 56px; border-radius: 28px; border: 2px solid; font-size: 26px; white-space: nowrap; }
.profile { width: 198px; padding-left: 4px; border-color: #1b66d0; background: #ebf1fb; color: #1b66d0; }
.profile .pill-text { letter-spacing: -.25px; }
.avatar { width: 44px; height: 44px; margin-right: 15px; border-radius: 50%; background: #f4512c; color: #fff; font-size: 24px; line-height: 44px; text-align: center; }
.update { width: 242px; margin-left: 8px; padding-left: 24px; border-color: #c5221f; background: #fcedec; color: #c5221f; }
.update .pill-text { width: 185px; letter-spacing: -.1px; }
.dots { display: flex; flex-direction: column; gap: 4px; }
.dots i { width: 6px; height: 6px; border-radius: 50%; background: #c5221f; }

.bookmarks { display: flex; align-items: center; height: 66px; padding: 0 0 8px 28px; border-bottom: 2px solid #dadce0; font-size: 24px; letter-spacing: -.15px; color: #3c4043; white-space: nowrap; }
.bm { display: flex; align-items: center; gap: 16px; width: 306px; }
.bm > span { margin-top: -1px; }
.bm svg { width: 32px; height: 32px; }
.bm.b1 { width: 220px; }
.bm.b2 { width: 304px; }
.bm.b6 { width: 308px; }
.bm.b6 > span { letter-spacing: -.3px; }
.bm.b7 { width: 473px; }
.bm-m { font: italic 700 28px "Liberation Serif", serif; fill: #fff; text-anchor: middle; }
.bm-w { font-size: 18px; font-weight: 900; fill: #fff; text-anchor: middle; }
.bm-w.shade { fill: #158a6e; }
.bm-css { font-size: 13px; font-weight: 800; fill: #f4f5e6; text-anchor: middle; letter-spacing: 0; }
.more { width: 14px; height: 12px; margin-right: 21px; }
.bm.reading { height: 32px; width: 260px; padding-left: 20px; border-left: 2px solid #cfd1d4; color: #202124; letter-spacing: -.05px; }

/* the web page */
.page { position: relative; flex: 1; display: flex; flex-direction: column; align-items: center; }
h1, h2 { margin: 0; font-weight: 500; }
h1 { font-size: 78px; line-height: 96px; margin-top: 2px; letter-spacing: -2.300px; }
.todo-form { display: flex; flex-direction: column; width: 1184px; margin-top: 47px; font-size: 31px; }
.todo-form label { align-self: center; line-height: 48px; margin-bottom: 15px; letter-spacing: -.250px; }
.field { display: flex; align-items: center; height: 76px; padding-left: 24px; border: 2px solid #86b7fe; border-radius: 8px; background: #fff; box-shadow: 0 0 0 8px #c2dbfe; }
.caret { width: 2px; height: 36px; background: #212529; }
.btn { display: flex; align-items: center; justify-content: center; border-radius: 8px; color: #fff; font-size: 31px; letter-spacing: -.200px; }
.primary { width: 166px; height: 76px; margin-top: 16px; padding-left: 1px; background: #1b72fa; letter-spacing: -.4px; }
h2 { font-size: 62px; line-height: 76px; margin-top: 34px; letter-spacing: -1.850px; }
.todos { display: flex; flex-direction: column; gap: 32px; width: 1152px; margin: 30px 0 0; padding: 0; list-style: none; font-size: 31px; letter-spacing: -.330px; }
.todos li { display: flex; align-items: center; justify-content: space-between; height: 148px; padding: 0 16px 0 48px; border: 2px solid #dee2e6; }
.danger { width: 186px; height: 84px; background: #dc3748; }
.dock-shade { position: absolute; left: 0; right: 0; bottom: 0; height: 100px; background: linear-gradient(rgba(0,0,0,0), rgba(0,0,0,.018) 45%, rgba(0,0,0,.08)); -webkit-mask-image: linear-gradient(90deg, transparent 10px, #000 100px, #000 2460px, transparent 2550px); mask-image: linear-gradient(90deg, transparent 10px, #000 100px, #000 2460px, transparent 2550px); }
.scroll-thumb { position: absolute; right: 4px; top: 36px; width: 14px; height: 1180px; border-radius: 7px; background: #7f7f7f; }

/* dock */
.dock { position: relative; display: flex; width: 2432px; height: 100px; margin-left: 64px; padding-left: 6px; border-radius: 12px 12px 0 0; background: linear-gradient(90deg, rgba(150, 105, 80, .25), rgba(90, 75, 65, .25)), linear-gradient(#7f6452, #8a6850); }
.app { width: 80px; height: 100px; margin-right: 1.050px; }
.app.on { background: radial-gradient(circle at 40px 92px, #080402 3.500px, transparent 4.300px); }
.stamp { transform: translateX(-2px); }
.rule { width: 2px; background: #4a2f20; }
.r1 { height: 48px; margin: 26px 17px 0 16px; }
.r2 { height: 72px; margin: 14px 18px 0 16px; }
.cal-month { font-size: 12.500px; fill: #fff; text-anchor: middle; }
.cal-day { font-size: 37px; font-weight: 300; fill: #1b1b1d; text-anchor: middle; }
.map3d { font-size: 12px; fill: #333; text-anchor: middle; }
.petals rect { opacity: .86; mix-blend-mode: multiply; }
.badge { font-size: 15px; fill: #fff; text-anchor: middle; }
.ide { font-size: 26px; font-weight: 700; fill: #fff; text-anchor: middle; }
.pma { font: italic 700 12px "Liberation Sans", sans-serif; fill: #2b2b64; text-anchor: middle; }
.txt { font-size: 10px; fill: #777; text-anchor: middle; }
```
